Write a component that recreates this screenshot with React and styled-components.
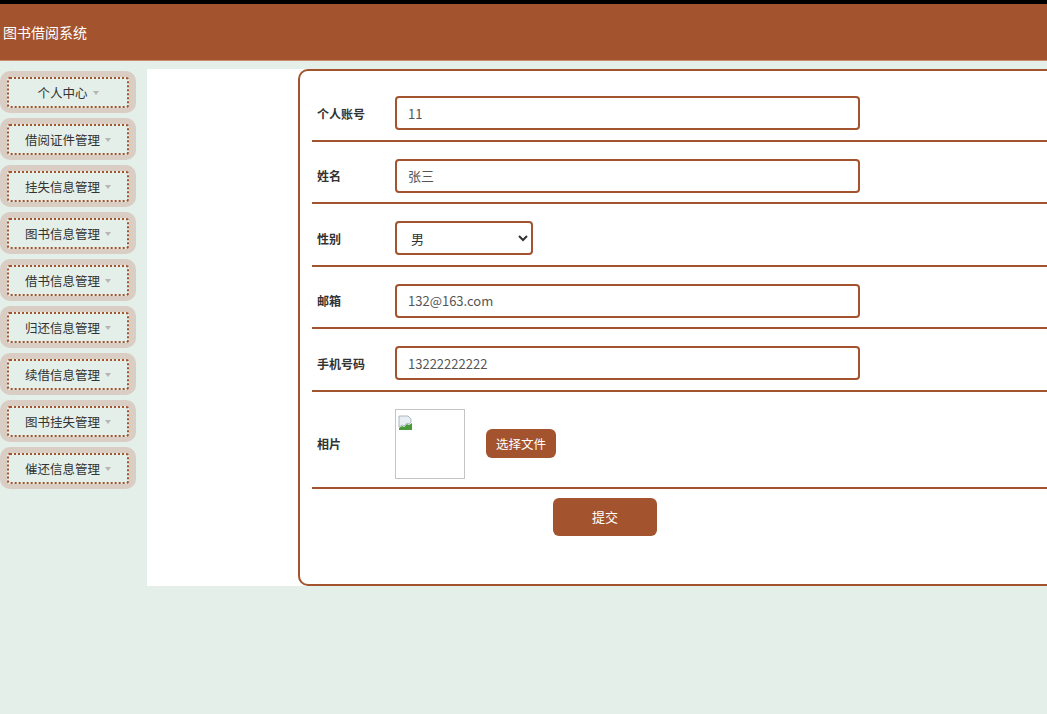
import React from 'react'
import styled, { createGlobalStyle } from 'styled-components'

const brown = '#a3542f'

const GlobalStyle = createGlobalStyle`
  html, body {
    margin: 0;
    padding: 0;
    background: #e4efe9;
    overflow: hidden;
    font-family: "Noto Sans CJK SC", "Noto Sans", sans-serif;
  }
`

const Page = styled.div`
  width: 1047px;
  height: 714px;
  overflow: hidden;
  background: #e4efe9;
`

const Header = styled.header`
  height: 56px;
  border-top: 4px solid #000;
  background: ${brown};
  border-bottom: 1px solid #c98c6c;
  display: flex;
  align-items: center;
  padding-left: 3px;
  color: #fff;
  font-size: 14px;
`

const Body = styled.div`
  display: flex;
  align-items: flex-start;
  gap: 11px;
  padding-top: 8px;
`

const Sidebar = styled.nav`
  width: 136px;
  flex-shrink: 0;
  display: flex;
  flex-direction: column;
  gap: 5px;
  padding-top: 2px;
`

const MenuPill = styled.div`
  background: #d9cdc4;
  border-radius: 10px;
  padding: 6px 7px 5px 7px;
`

const MenuButton = styled.div`
  height: 27px;
  border: 2px dotted ${brown};
  border-radius: 3px;
  background: #e4efe9;
  display: flex;
  align-items: center;
  justify-content: center;
  gap: 5px;
  white-space: nowrap;
  font-size: 12.5px;
  color: #333;
`

const Caret = styled.span`
  width: 0;
  height: 0;
  border-left: 3.5px solid transparent;
  border-right: 3.5px solid transparent;
  border-top: 4px solid #b5b5b5;
`

const Panel = styled.main`
  flex: 1;
  min-width: 0;
  background: #fff;
  height: 517px;
  display: flex;
  padding-left: 151px;
`

const Card = styled.form`
  width: 800px;
  flex-shrink: 0;
  border: 2px solid ${brown};
  border-radius: 10px;
  padding: 8px 0 0 12px;
  box-sizing: border-box;
  height: 517px;
`

const Row = styled.div`
  display: flex;
  align-items: center;
  padding: ${p => (p.$photo ? '17px 0 8px' : '17px 0 9.5px')};
  border-bottom: 2px solid ${brown};
`

const Label = styled.label`
  width: 83px;
  flex-shrink: 0;
  padding-left: 5px;
  box-sizing: border-box;
  font-size: 12px;
  font-weight: bold;
  color: #333;
`

const Input = styled.input`
  width: 465px;
  height: 34px;
  box-sizing: border-box;
  border: 2px solid ${brown};
  border-radius: 4px;
  padding: 0 11px;
  font-family: inherit;
  font-size: 13px;
  color: #555;
  outline: none;
`

const Select = styled.select`
  width: 138px;
  height: 34px;
  box-sizing: border-box;
  border: 2px solid ${brown};
  border-radius: 4px;
  padding: 0 10px;
  font-family: inherit;
  font-size: 13px;
  color: #333;
  background: #fff;
  outline: none;
`

const Photo = styled.div`
  width: 70px;
  height: 70px;
  box-sizing: border-box;
  border: 1px solid #c4c4c4;
  padding: 2px;
`

const FileButton = styled.button`
  margin-left: 21px;
  height: 29px;
  padding: 0 10px;
  border: none;
  border-radius: 6px;
  background: ${brown};
  color: #fff;
  font-family: inherit;
  font-size: 12.5px;
`

const Actions = styled.div`
  display: flex;
  padding: 9px 0 0 241px;
`

const SubmitButton = styled.button`
  width: 104px;
  height: 38px;
  border: none;
  border-radius: 6px;
  background: ${brown};
  color: #fff;
  font-family: inherit;
  font-size: 13px;
`

const BrokenImage = () => (
  <svg width="16" height="16" viewBox="0 0 16 16">
    <path d="M1 1h9l3 3v3l-2 2-2-1-3 3-2-1-3 2z" fill="#e9eef4" stroke="#9aa8b8" strokeWidth="0.8" />
    <path d="M1 13l3-2 2 1 3-3 2 1 3-2v7H1z" fill="#4a9a3c" />
  </svg>
)

const menus = [
  '个人中心',
  '借阅证件管理',
  '挂失信息管理',
  '图书信息管理',
  '借书信息管理',
  '归还信息管理',
  '续借信息管理',
  '图书挂失管理',
  '催还信息管理',
]

export default function App() {
  return (
    <Page>
      <GlobalStyle />
      <Header>图书借阅系统</Header>
      <Body>
        <Sidebar>
          {menus.map(m => (
            <MenuPill key={m}>
              <MenuButton>
                {m}
                <Caret />
              </MenuButton>
            </MenuPill>
          ))}
        </Sidebar>
        <Panel>
          <Card onSubmit={e => e.preventDefault()}>
            <Row>
              <Label>个人账号</Label>
              <Input defaultValue="11" />
            </Row>
            <Row>
              <Label>姓名</Label>
              <Input defaultValue="张三" />
            </Row>
            <Row>
              <Label>性别</Label>
              <Select defaultValue="男">
                <option>男</option>
                <option>女</option>
              </Select>
            </Row>
            <Row>
              <Label>邮箱</Label>
              <Input defaultValue="132@163.com" />
            </Row>
            <Row>
              <Label>手机号码</Label>
              <Input defaultValue="13222222222" />
            </Row>
            <Row $photo>
              <Label>相片</Label>
              <Photo>
                <BrokenImage />
              </Photo>
              <FileButton type="button">选择文件</FileButton>
            </Row>
            <Actions>
              <SubmitButton type="submit">提交</SubmitButton>
            </Actions>
          </Card>
        </Panel>
      </Body>
    </Page>
  )
}
